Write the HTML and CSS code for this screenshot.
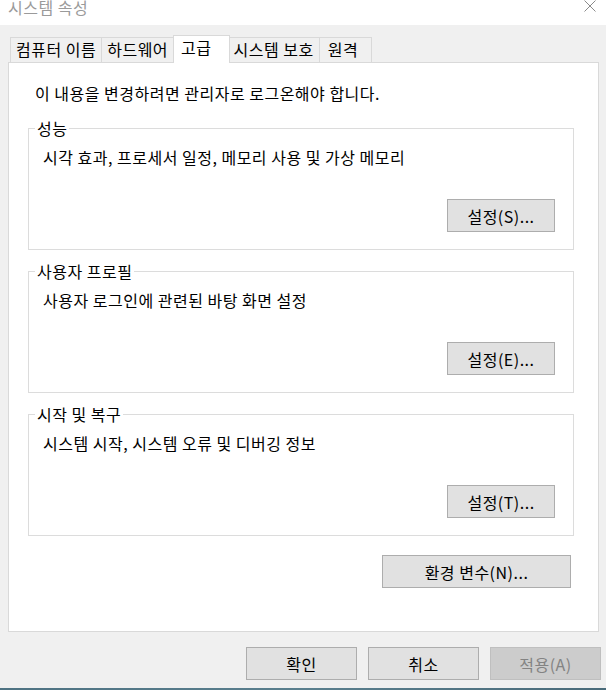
FILE: index.html
```html
<!DOCTYPE html>
<html>
<head>
    <title>시스템 속성</title>
    <link rel="stylesheet" href="styles.css">
</head>
<body>
<div class="titlebar">
    <span class="title">시스템 속성</span>
    <svg class="close" width="12" height="12" viewBox="0 0 12 12">
        <path d="M0.5 0.5 L11.5 11.5 M11.5 0.5 L0.5 11.5" stroke="#8a8a8a" stroke-width="1" fill="none"/>
    </svg>
</div>
<div class="dialog">
    <div class="tabs">
        <div class="tab">컴퓨터 이름</div>
        <div class="tab">하드웨어</div>
        <div class="tab active">고급</div>
        <div class="tab">시스템 보호</div>
        <div class="tab last">원격</div>
    </div>
    <div class="panel">
        <p class="notice">이 내용을 변경하려면 관리자로 로그온해야 합니다.</p>

        <div class="group">
            <span class="group-title">성능</span>
            <p class="group-text">시각 효과, 프로세서 일정, 메모리 사용 및 가상 메모리</p>
            <button class="btn group-btn">설정(S)...</button>
        </div>

        <div class="group">
            <span class="group-title">사용자 프로필</span>
            <p class="group-text">사용자 로그인에 관련된 바탕 화면 설정</p>
            <button class="btn group-btn">설정(E)...</button>
        </div>

        <div class="group">
            <span class="group-title">시작 및 복구</span>
            <p class="group-text">시스템 시작, 시스템 오류 및 디버깅 정보</p>
            <button class="btn group-btn">설정(T)...</button>
        </div>

        <button class="btn env-btn">환경 변수(N)...</button>
    </div>
    <div class="actions">
        <button class="btn action-btn">확인</button>
        <button class="btn action-btn">취소</button>
        <button class="btn action-btn" disabled>적용(A)</button>
    </div>
</div>
<div class="desktop-edge"></div>
</body>
</html>
```

FILE: styles.css
```css
html, body {
    margin: 0px;
    padding: 0px;
    width: 606px;
    height: 690px;
    overflow: hidden;
}

body {
    font-family: "Noto Sans CJK KR", "Noto Sans", sans-serif;
    font-size: 16px;
    letter-spacing: 0.5px;
    color: #000;
    background-color: #f0f0f0;
}

p {
    margin: 0px;
}

/* title bar */
.titlebar {
    height: 25px;
    background-color: #fff;
    display: flex;
    justify-content: space-between;
    align-items: flex-start;
    padding: 0px 10px 0px 8px;
    box-sizing: border-box;
    overflow: hidden;
}

.title {
    line-height: 20px;
    margin-top: -3px;
    color: #9a9a9a;
}

.close {
    display: block;
}

/* dialog body */
.dialog {
    height: 663px;
    padding: 10px 5px 0px 8px;
    box-sizing: border-box;
    background-color: #f0f0f0;
}

.tabs {
    display: flex;
    align-items: flex-end;
    height: 27px;
    padding-left: 2px;
}

.tab {
    position: relative;
    height: 25px;
    box-sizing: border-box;
    border: 1px solid #d9d9d9;
    border-bottom: none;
    margin-left: -1px;
    padding: 0px 5px;
    line-height: 23px;
    white-space: nowrap;
    background-color: #f0f0f0;
}

.tab:first-child {
    margin-left: 0px;
}

.tab.active {
    z-index: 1;
    height: 28px;
    margin-bottom: -1px;
    margin-right: -1px;
    padding: 0px 17px 0px 7px;
    line-height: 23px;
    background-color: #fff;
}

.tab.last {
    min-width: 53px;
    padding-left: 8px;
}

.panel {
    width: 591px;
    height: 570px;
    box-sizing: border-box;
    border: 1px solid #d9d9d9;
    background-color: #fff;
    padding: 20px 24px 0px 19px;
    display: flex;
    flex-direction: column;
}

.notice {
    line-height: 20px;
    margin-left: 7px;
}

.group {
    height: 122px;
    box-sizing: border-box;
    border: 1px solid #dcdcdc;
    padding: 0px 18px 17px 0px;
    margin-top: 21px;
    display: flex;
    flex-direction: column;
}

.notice + .group {
    margin-top: 25px;
}

.group-title {
    align-self: flex-start;
    margin: -11px 0px 0px 6px;
    padding: 0px 2px;
    line-height: 20px;
    background-color: #fff;
}

.group-text {
    margin: 9px 0px 0px 14px;
    line-height: 20px;
}

/* buttons */
.btn {
    font-family: inherit;
    font-size: 16px;
    letter-spacing: 0.5px;
    color: #000;
    height: 33px;
    box-sizing: border-box;
    border: 1px solid #adadad;
    background-color: #e1e1e1;
    padding: 0px;
    margin: 0px;
    line-height: 20px;
}

.btn:disabled {
    border-color: #bfbfbf;
    background-color: #cccccc;
    color: #838383;
}

.group-btn {
    align-self: flex-end;
    margin-top: auto;
    width: 108px;
}

.env-btn {
    align-self: flex-end;
    width: 189px;
    margin: 19px 3px 0px 0px;
}

.actions {
    display: flex;
    justify-content: flex-end;
    gap: 11px;
    margin-top: 15px;
}

.action-btn {
    width: 111px;
}

.desktop-edge {
    height: 2px;
    background: linear-gradient(to right, #4e7282, #5a7f8e 50%, #4a6b7a);
}
```
